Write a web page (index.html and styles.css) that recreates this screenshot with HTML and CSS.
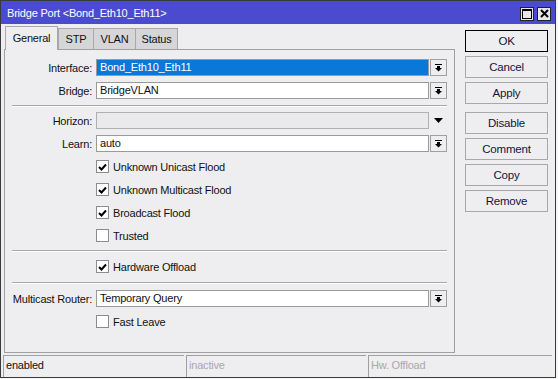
FILE: index.html
```html
<!DOCTYPE html>
<html lang="en">
<head>
    <meta charset="UTF-8">
    <title>Bridge Port</title>
    <link rel="stylesheet" href="styles.css">
</head>
<body>
    <div class="window">
        <div class="titlebar">
            <span class="title">Bridge Port &lt;Bond_Eth10_Eth11&gt;</span>
            <div class="title-buttons">
                <span class="tbtn">
                    <svg width="10" height="10" viewBox="0 0 10 10"><rect x="0.5" y="0.5" width="9" height="9" fill="none" stroke="#000"/><rect x="0" y="0" width="10" height="2" fill="#000"/></svg>
                </span>
                <span class="tbtn">
                    <svg width="9" height="9" viewBox="0 0 9 9"><path d="M1 1 L8 8 M8 1 L1 8" stroke="#000" stroke-width="2"/></svg>
                </span>
            </div>
        </div>

        <div class="main">
            <div class="left">
                <div class="tabs">
                    <div class="tab active">General</div>
                    <div class="tab t-stp">STP</div>
                    <div class="tab t-vlan">VLAN</div>
                    <div class="tab t-status">Status</div>
                </div>

                <div class="panel">
                    <div class="row first">
                        <span class="lbl">Interface:</span>
                        <div class="field selected">Bond_Eth10_Eth11</div>
                        <div class="dd">
                            <svg width="7" height="8" viewBox="0 0 7 8"><rect x="0" y="0" width="7" height="1"/><rect x="2" y="2" width="3" height="2"/><path d="M0 4 L7 4 L3.5 7.5 Z"/></svg>
                        </div>
                    </div>
                    <div class="row">
                        <span class="lbl">Bridge:</span>
                        <div class="field">BridgeVLAN</div>
                        <div class="dd">
                            <svg width="7" height="8" viewBox="0 0 7 8"><rect x="0" y="0" width="7" height="1"/><rect x="2" y="2" width="3" height="2"/><path d="M0 4 L7 4 L3.5 7.5 Z"/></svg>
                        </div>
                    </div>

                    <div class="sep sep-a"></div>

                    <div class="row">
                        <span class="lbl">Horizon:</span>
                        <div class="field disabled"></div>
                        <div class="dd plain">
                            <svg width="9" height="5" viewBox="0 0 9 5"><path d="M0 0 L9 0 L4.5 5 Z"/></svg>
                        </div>
                    </div>
                    <div class="row">
                        <span class="lbl">Learn:</span>
                        <div class="field">auto</div>
                        <div class="dd">
                            <svg width="7" height="8" viewBox="0 0 7 8"><rect x="0" y="0" width="7" height="1"/><rect x="2" y="2" width="3" height="2"/><path d="M0 4 L7 4 L3.5 7.5 Z"/></svg>
                        </div>
                    </div>

                    <div class="checks">
                        <div class="check"><span class="box on"><svg width="9" height="8" viewBox="0 0 9 8"><path d="M1 4 L3.5 6.5 L8 1.5" fill="none" stroke="#000" stroke-width="2"/></svg></span>Unknown Unicast Flood</div>
                        <div class="check"><span class="box on"><svg width="9" height="8" viewBox="0 0 9 8"><path d="M1 4 L3.5 6.5 L8 1.5" fill="none" stroke="#000" stroke-width="2"/></svg></span>Unknown Multicast Flood</div>
                        <div class="check"><span class="box on"><svg width="9" height="8" viewBox="0 0 9 8"><path d="M1 4 L3.5 6.5 L8 1.5" fill="none" stroke="#000" stroke-width="2"/></svg></span>Broadcast Flood</div>
                        <div class="check"><span class="box"></span>Trusted</div>
                    </div>

                    <div class="sep sep-b"></div>

                    <div class="checks single">
                        <div class="check"><span class="box on"><svg width="9" height="8" viewBox="0 0 9 8"><path d="M1 4 L3.5 6.5 L8 1.5" fill="none" stroke="#000" stroke-width="2"/></svg></span>Hardware Offload</div>
                    </div>

                    <div class="sep sep-c"></div>

                    <div class="row">
                        <span class="lbl">Multicast Router:</span>
                        <div class="field">Temporary Query</div>
                        <div class="dd">
                            <svg width="7" height="8" viewBox="0 0 7 8"><rect x="0" y="0" width="7" height="1"/><rect x="2" y="2" width="3" height="2"/><path d="M0 4 L7 4 L3.5 7.5 Z"/></svg>
                        </div>
                    </div>

                    <div class="checks last">
                        <div class="check"><span class="box"></span>Fast Leave</div>
                    </div>
                </div>
            </div>

            <div class="actions">
                <div class="btn default">OK</div>
                <div class="btn">Cancel</div>
                <div class="btn">Apply</div>
                <div class="btn group">Disable</div>
                <div class="btn">Comment</div>
                <div class="btn">Copy</div>
                <div class="btn">Remove</div>
            </div>
        </div>

        <div class="statusbar">
            <div class="cell c1">enabled</div>
            <div class="cell c2 dim">inactive</div>
            <div class="cell c3 dim">Hw. Offload</div>
        </div>
    </div>
</body>
</html>
```

FILE: styles.css
```css
* {
    margin: 0;
    padding: 0;
    box-sizing: border-box;
}

body {
    background: #f4f4f4;
    font-family: 'Liberation Sans', Arial, sans-serif;
    font-size: 11px;
    letter-spacing: -0.2px;
    color: #111;
}

.window {
    width: 556px;
    height: 378px;
    border: 1px solid #3a3a3a;
    background: #eeeef0;
    display: flex;
    flex-direction: column;
}

/* barre de titre */
.titlebar {
    height: 23px;
    background: #4b4bd0;
    display: flex;
    align-items: center;
    justify-content: space-between;
    padding: 0 4px 0 6px;
    flex-shrink: 0;
}

.title {
    color: #fff;
    font-size: 11px;
    padding-top: 1px;
}

.title-buttons {
    display: flex;
    gap: 3px;
    margin-top: 2px;
}

.tbtn {
    width: 14px;
    height: 14px;
    border: 1px solid #222;
    background: #e6e6ea;
    display: flex;
    align-items: center;
    justify-content: center;
}

.main {
    display: flex;
    height: 329px;
    flex-shrink: 0;
}

.left {
    padding-left: 3px;
    display: flex;
    flex-direction: column;
}

/* onglets */
.tabs {
    display: flex;
    align-items: flex-end;
    height: 25px;
    padding-top: 2px;
    padding-left: 1px;
}

.tab {
    height: 21px;
    background: #d6d6d8;
    border: 1px solid #a8a8a8;
    border-bottom: none;
    display: flex;
    align-items: center;
    justify-content: center;
    color: #111;
}

.tab + .tab {
    margin-left: -1px;
}

.tab.active {
    height: 24px;
    width: 53px;
    margin-bottom: -1px;
    background: #eeeef0;
    position: relative;
    z-index: 1;
    padding-bottom: 2px;
}

.tab.t-stp { width: 36px; margin-left: 0; }
.tab.t-vlan { width: 43px; }
.tab.t-status { width: 43px; }

.panel {
    width: 451px;
    height: 304px;
    border: 1px solid #a0a0a0;
    padding-top: 9px;
}

.row {
    display: flex;
    align-items: center;
    height: 17px;
    margin-bottom: 6px;
}

.lbl {
    width: 87px;
    text-align: right;
    margin-right: 3px;
    flex-shrink: 0;
}

.field {
    width: 333px;
    height: 17px;
    border: 1px solid #9a9a9a;
    background: #fff;
    padding: 0 3px;
    line-height: 15px;
    margin-left: 1px;
}

.field.selected {
    background: #0a78d8;
    color: #fff;
}

.field.disabled {
    background: #eaeaec;
    border-color: #b0b0b0;
}

.dd {
    width: 17px;
    height: 17px;
    margin-left: 1px;
    border: 1px solid #a0a0a0;
    display: flex;
    align-items: center;
    justify-content: center;
}

.dd.plain {
    border-color: transparent;
}

.sep {
    margin-left: 7px;
    width: 435px;
    height: 2px;
    border-top: 1px solid #a8a8a8;
    border-bottom: 1px solid #fff;
}

.sep-a {
    margin-top: 2px;
    margin-bottom: 5px;
}

.checks {
    padding-left: 91px;
    margin-top: 2px;
    display: flex;
    flex-direction: column;
    gap: 6px;
}

.check {
    height: 17px;
    display: flex;
    align-items: center;
    gap: 4px;
}

.box {
    width: 13px;
    height: 13px;
    border: 1px solid #8c8c8c;
    background: #fff;
    display: flex;
    align-items: center;
    justify-content: center;
}

.sep-b {
    margin-top: 6px;
    margin-bottom: 6px;
}

.checks.single {
    margin-top: 0;
}

.sep-c {
    margin-top: 7px;
    margin-bottom: 6px;
}

.checks.last {
    margin-top: 2px;
}

/* boutons */
.actions {
    margin-left: 10px;
    padding-top: 6px;
    display: flex;
    flex-direction: column;
    gap: 4px;
}

.btn {
    width: 83px;
    height: 22px;
    border: 1px solid #a8a8a8;
    background: #eeeef0;
    display: flex;
    align-items: center;
    justify-content: center;
    font-size: 11.5px;
    color: #14143c;
}

.btn.default {
    border-color: #000;
}

.btn.group {
    margin-top: 4px;
}

/* barre d'état */
.statusbar {
    margin-top: 2px;
    padding-left: 2px;
    display: flex;
    gap: 2px;
    height: 22px;
}

.cell {
    border-top: 1px solid #a0a0a0;
    border-left: 1px solid #a0a0a0;
    padding: 3px 0 0 2px;
    font-size: 11px;
}

.c1 { width: 181px; }
.c2 { width: 180px; }
.c3 { width: 184px; }

.dim {
    color: #a8a8a8;
}
```
